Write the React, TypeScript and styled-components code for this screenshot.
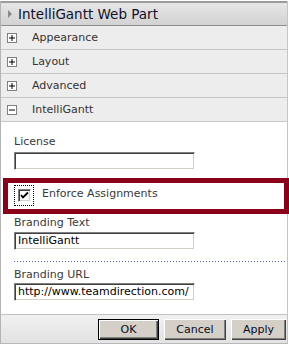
import styled, { createGlobalStyle } from "styled-components"

const GlobalStyle = createGlobalStyle`
  html, body {
    margin: 0;
    padding: 0;
    background: #fff;
  }
  body {
    font-family: "DejaVu Sans", Verdana, sans-serif;
    font-size: 11px;
    color: #3a3a3a;
  }
`

const Page = styled.div`
  width: 289px;
  height: 349px;
  overflow: hidden;
  background: #fff;
`

const Panel = styled.div`
  width: 286px;
  margin-top: 1px;
  border-left: 1px solid #b4b4b4;
  border-right: 1px solid #c4c4c4;
  border-bottom: 1px solid #b8b8b8;
`

const Header = styled.div`
  display: flex;
  align-items: center;
  height: 22px;
  padding-left: 7px;
  border-top: 2px solid #9c9c9c;
  border-bottom: 1px solid #8e8e8e;
  background: linear-gradient(#e6e6e6, #d2d2d2);
  .arrow {
    width: 0;
    height: 0;
    border-top: 4px solid transparent;
    border-bottom: 4px solid transparent;
    border-left: 4px solid #8a8a8a;
    margin-right: 6px;
  }
  .title {
    font-size: 13.5px;
    color: #10102a;
    white-space: nowrap;
  }
`

const SectionRow = styled.div`
  display: flex;
  align-items: center;
  height: 23px;
  padding-left: 6px;
  background: #ededed;
  border-bottom: 1px solid #c6c6c6;
  color: #333;
  .toggle {
    display: block;
    margin-right: 15px;
  }
`

const Body = styled.div`
  padding: 13px 0 13px 13px;
  background: #fff;
`

const Label = styled.div`
  line-height: 13px;
  white-space: nowrap;
`

const TextInput = styled.div<{ $gap?: number }>`
  box-sizing: border-box;
  width: 181px;
  height: 18px;
  margin-top: ${({ $gap }) => $gap ?? 3}px;
  padding: 0 3px;
  border-top: 1px solid #808080;
  border-left: 1px solid #808080;
  border-right: 1px solid #ffffff;
  border-bottom: 1px solid #ffffff;
  box-shadow: inset 1px 1px 0 #404040, inset -1px -1px 0 #d4d0c8;
  background: #fff;
  line-height: 16px;
  color: #000;
  white-space: nowrap;
  overflow: hidden;
`

const CheckRow = styled.div`
  position: relative;
  display: flex;
  align-items: flex-start;
  height: 34px;
  margin-top: 9px;
  margin-bottom: 3px;
  .text {
    margin-left: 8px;
    margin-top: 8px;
    line-height: 13px;
  }
`

const Highlight = styled.div`
  position: absolute;
  top: -1px;
  bottom: -1px;
  left: -11px;
  right: -2px;
  border: 5px solid #8a0019;
  pointer-events: none;
`

const FocusBox = styled.div`
  box-sizing: border-box;
  width: 20px;
  height: 21px;
  margin-top: 6px;
  padding: 2px;
  border: 1px dotted #000;
  display: flex;
  align-items: center;
  justify-content: center;
`

const CheckBox = styled.div`
  box-sizing: border-box;
  width: 13px;
  height: 13px;
  border-top: 1px solid #808080;
  border-left: 1px solid #808080;
  border-right: 1px solid #fff;
  border-bottom: 1px solid #fff;
  box-shadow: inset 1px 1px 0 #404040, inset -1px -1px 0 #d4d0c8;
  background: #fff;
  svg {
    display: block;
  }
`

const Separator = styled.div`
  height: 1px;
  margin: 11px 0 6px;
  background: repeating-linear-gradient(to right, #4f63c4 0 1px, transparent 1px 3px);
`

const ButtonBar = styled.div`
  display: flex;
  justify-content: flex-end;
  gap: 5px;
  padding: 4px 1px 3px 0;
  border-top: 1px solid #c2c2c2;
  background: linear-gradient(#f0f0f0, #e2e2e2);
`

const Button = styled.div<{ $width: number; $default?: boolean }>`
  box-sizing: border-box;
  width: ${({ $width }) => $width}px;
  height: 21px;
  display: flex;
  align-items: center;
  justify-content: center;
  background: #d4d0c8;
  color: #0a0a20;
  border: ${({ $default }) => ($default ? "1px solid #000" : "none")};
  box-shadow: inset 1px 1px 0 #fff, inset -1px -1px 0 #404040, inset -2px -2px 0 #808080;
`

function ToggleIcon({ open }: { open?: boolean }) {
  return (
    <svg className="toggle" width="10" height="10" viewBox="0 0 10 10">
      <rect x="0.5" y="0.5" width="9" height="9" fill="#fff" stroke="#808080" />
      <path d="M2 5h6" stroke="#000" strokeWidth="1" />
      {!open && <path d="M5 2v6" stroke="#000" strokeWidth="1" />}
    </svg>
  )
}

const sections = ["Appearance", "Layout", "Advanced"]

export default function App() {
  return (
    <Page>
      <GlobalStyle />
      <Panel>
        <Header>
          <span className="arrow" />
          <span className="title">IntelliGantt Web Part</span>
        </Header>
        {sections.map((name) => (
          <SectionRow key={name}>
            <ToggleIcon />
            {name}
          </SectionRow>
        ))}
        <SectionRow>
          <ToggleIcon open />
          IntelliGantt
        </SectionRow>
        <Body>
          <Label>License</Label>
          <TextInput $gap={4} />
          <CheckRow>
            <FocusBox>
              <CheckBox>
                <svg width="11" height="11" viewBox="0 0 11 11">
                  <polyline points="2,5 4,7.5 9,2.5" fill="none" stroke="#000" strokeWidth="1.8" />
                </svg>
              </CheckBox>
            </FocusBox>
            <span className="text">Enforce Assignments</span>
            <Highlight />
          </CheckRow>
          <Label>Branding Text</Label>
          <TextInput>IntelliGantt</TextInput>
          <Separator />
          <Label>Branding URL</Label>
          <TextInput $gap={2}>http://www.teamdirection.com/</TextInput>
        </Body>
        <ButtonBar>
          <Button $width={61} $default>OK</Button>
          <Button $width={62}>Cancel</Button>
          <Button $width={55}>Apply</Button>
        </ButtonBar>
      </Panel>
    </Page>
  )
}
